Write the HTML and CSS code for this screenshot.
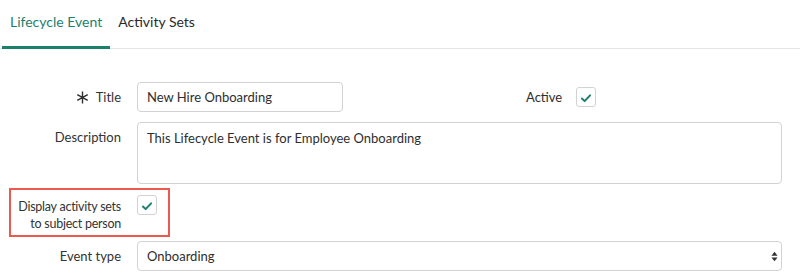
FILE: index.html
```html
<!DOCTYPE html>
<html lang="en">
<head>
    <meta charset="UTF-8">
    <link rel="stylesheet" href="styles.css">
    <title>Lifecycle Event</title>
</head>
<body>
    <div class="tabs">
        <div class="tab active">Lifecycle Event</div>
        <div class="tab">Activity Sets</div>
    </div>

    <form class="form">
        <div class="row">
            <label class="label">
                <svg class="req" viewBox="0 0 14 14" width="13" height="13"><path d="M7 0.5V13.5M1.4 3.8L12.6 10.2M12.6 3.8L1.4 10.2" stroke="#2e2e2e" stroke-width="1.5" fill="none"/></svg>
                Title
            </label>
            <div class="field">
                <input type="text" class="input short" value="New Hire Onboarding">
                <span class="side-label">Active</span>
                <span class="check">
                    <svg viewBox="0 0 20 20" width="20" height="20"><path d="M5.5 10.5l3 3 6-6.5" fill="none" stroke="#1d7f6e" stroke-width="2.2" stroke-linecap="round" stroke-linejoin="round"/></svg>
                </span>
            </div>
        </div>

        <div class="row">
            <label class="label top">Description</label>
            <div class="field">
                <textarea class="input area">This Lifecycle Event is for Employee Onboarding</textarea>
            </div>
        </div>

        <div class="row marked">
            <label class="label two">Display activity sets<br>to subject person</label>
            <div class="field">
                <span class="check">
                    <svg viewBox="0 0 20 20" width="20" height="20"><path d="M5.5 10.5l3 3 6-6.5" fill="none" stroke="#1d7f6e" stroke-width="2.2" stroke-linecap="round" stroke-linejoin="round"/></svg>
                </span>
            </div>
            <div class="highlight"></div>
        </div>

        <div class="row">
            <label class="label">Event type</label>
            <div class="field">
                <div class="input select">
                    <span>Onboarding</span>
                    <svg viewBox="0 0 8 12" width="7" height="11"><path d="M4 0.5L7.5 5H0.5z M4 11.5L0.5 7H7.5z" fill="#333"/></svg>
                </div>
            </div>
        </div>
    </form>
</body>
</html>
```

FILE: styles.css
```css
* {
    margin: 0;
    padding: 0;
    box-sizing: border-box;
    font-family: Lato, "Open Sans", sans-serif;
}

body {
    background: #fff;
    color: #2e2e2e;
    width: 800px;
    height: 280px;
    overflow: hidden;
}

.tabs {
    display: flex;
    padding-left: 2px;
    border-bottom: 1px solid #e6e6e6;
    height: 49px;
}

.tab {
    font-size: 14px;
    padding: 13px 8px 0 8px;
    color: #2a2a2a;
}

.tab.active {
    color: #1d7f6e;
    border-bottom: 3px solid #1d7f6e;
    margin-bottom: -1px;
}

.form {
    display: flex;
    flex-direction: column;
    gap: 10px;
    padding-top: 33px;
}

.row {
    display: grid;
    grid-template-columns: 121px 645px;
    column-gap: 16px;
    align-items: center;
    position: relative;
}

.label {
    font-size: 13px;
    text-align: right;
    color: #333;
    display: flex;
    align-items: center;
    justify-content: flex-end;
}

.label.top {
    align-self: start;
    padding-top: 7px;
}

.label.two {
    display: block;
    font-size: 12.5px;
    line-height: 17px;
    padding-top: 10px;
    white-space: nowrap;
    letter-spacing: -0.25px;
}

.req {
    margin-right: 7px;
}

.field {
    display: flex;
    align-items: center;
}

.input {
    font-size: 13px;
    color: #2e2e2e;
    border: 1px solid #d2d2d2;
    border-radius: 4px;
    padding: 0 9px;
    height: 30px;
    background: #fff;
}

.short {
    width: 206px;
}

.area {
    width: 100%;
    height: 62px;
    padding: 7px 9px;
    resize: none;
}

.side-label {
    font-size: 13px;
    margin-left: 183px;
    margin-right: 14px;
}

.check {
    display: inline-flex;
    width: 20px;
    height: 20px;
    border: 1px solid #d2d2d2;
    border-radius: 3px;
}

.marked {
    align-items: start;
    height: 49px;
    margin-top: -6px;
    margin-bottom: -6px;
}

.marked .field {
    padding-top: 7px;
}

.highlight {
    position: absolute;
    left: 9px;
    top: 0;
    width: 161px;
    height: 49px;
    border: 2px solid #ec5a4f;
}

.select {
    width: 100%;
    display: flex;
    align-items: center;
    justify-content: space-between;
    padding-right: 3px;
}
```
